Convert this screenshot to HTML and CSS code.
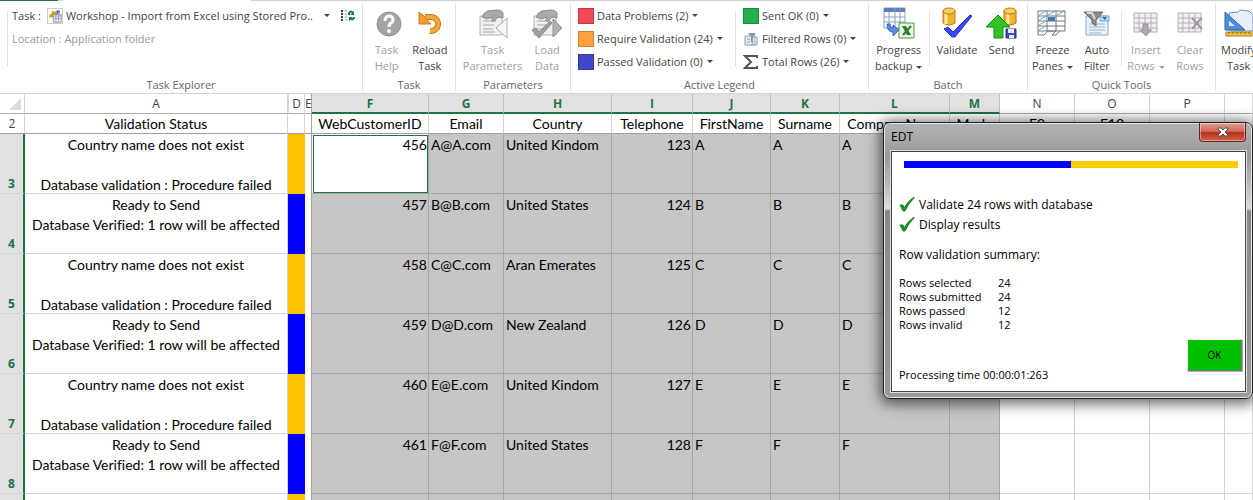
FILE: index.html
```html
<!DOCTYPE html>
<html lang="en">
<head>
<meta charset="utf-8">
<title>Workshop - Import from Excel using Stored Procedure</title>
<link rel="stylesheet" href="styles.css">
</head>
<body>
<div class="tabstrip"><span class="tab-file"></span><span class="tab-active"></span></div>
<header class="ribbon">
  <section class="group group-explorer">
    <div class="tools tools-lines">
      <button class="line"><span>Task :</span>
        <svg class="i16 framed" viewBox="0 0 16 16"><path d="M1 8l3-3 1-3 3 1 3-2-1 3 2 2-3 2-2 3-2-2-3 1z" fill="#d99a1c"/><path d="M10 1l4 1-1 3-3 1z" fill="#5b7fb8"/><rect x="6" y="6" width="9" height="9" fill="#fff" stroke="#7f93b2"/><path d="M6 8h9M6 11h9M9 6v9M12 6v9" stroke="#7f93b2"/></svg>
        <span class="task-name">Workshop - Import from Excel using Stored Pro..</span><i class="caret"></i>
        <svg class="i16 refresh" viewBox="0 0 16 16"><path d="M2 2v12" stroke="#2d3e5c" stroke-width="2" stroke-dasharray="2 1"/><path d="M5 3h2M5 6h2M5 9h2M5 12h2" stroke="#8793a5"/><path d="M9 7V5q2-3 4 0M14 9v1q-2 3-4 0" fill="none" stroke="#16823b" stroke-width="2"/><path d="M14 3v4h-4zM9 13V9h4z" fill="#16823b"/></svg>
      </button>
      <span class="line muted">Location : Application folder</span>
    </div>
    <h2>Task Explorer</h2>
  </section>

  <section class="group group-task">
    <div class="tools">
      <button class="big" disabled><svg class="i32" viewBox="0 0 32 32"><circle cx="18" cy="17" r="12" fill="#a5a5a5" stroke="#8f8f8f"/><path d="M14 14q0-5 4-5t4 4q0 2-2 3t-2 4" fill="none" stroke="#fff" stroke-width="3"/><circle cx="18" cy="24" r="2" fill="#fff"/></svg><span>Task<br>Help</span></button>
      <button class="big"><svg class="i32" viewBox="0 0 32 32"><path d="M11 10h7a7 7 0 1 1-2 14" fill="none" stroke="#c67a16" stroke-width="6"/><path d="M11 10h7a7 7 0 1 1-2 14" fill="none" stroke="#f2a73c" stroke-width="4"/><path d="M5 5v12h12l-4-4-3-4z" fill="#f0a033" stroke="#c67a16"/></svg><span>Reload<br>Task</span></button>
    </div>
    <h2>Task</h2>
  </section>

  <section class="group group-params">
    <div class="tools">
      <button class="big" disabled><svg class="i32" viewBox="0 0 32 32"><path d="M3 9h22v19H3z" fill="#f0f0f0" stroke="#b4b4b4"/><path d="M6 14h13M6 18h11M6 22h10M6 25h12" stroke="#a8a8a8"/><path d="M5 10q2-5 6-6l8-1q6 0 7 3v5l-5-1q-3 5-6 4 0-3 1-4l-6 2z" fill="#aaa" stroke="#8e8e8e"/><path d="M30 11v20L19 21z" fill="#f7f7f7" stroke="#aaa"/></svg><span>Task<br>Parameters</span></button>
      <button class="big" disabled><svg class="i32" viewBox="0 0 32 32"><path d="M3 9h22v19H3z" fill="#f0f0f0" stroke="#b4b4b4"/><path d="M6 14h13M6 18h11M6 22h10" stroke="#a8a8a8"/><path d="M5 10q2-5 6-6l8-1q6 0 7 3v5l-5-1q-3 5-6 4 0-3 1-4l-6 2z" fill="#aaa" stroke="#8e8e8e"/><path d="M22 12l9 9-9 9z" fill="#b0b0b0" stroke="#939393"/><path d="M1 23l4-2 3 4 11-11 2 2L8 31z" fill="#a0a0a0" stroke="#8d8d8d"/></svg><span>Load<br>Data</span></button>
    </div>
    <h2>Parameters</h2>
  </section>

  <section class="group group-legend">
    <div class="tools">
      <div class="legend edge">
        <button class="line"><i class="swatch red"></i>Data Problems (2)<i class="caret"></i></button>
        <button class="line"><i class="swatch orange"></i>Require Validation (24)<i class="caret"></i></button>
        <button class="line"><i class="swatch indigo"></i>Passed Validation (0)<i class="caret"></i></button>
      </div>
      <div class="legend legend-counts">
        <button class="line"><i class="swatch green"></i>Sent OK (0)<i class="caret"></i></button>
        <button class="line"><svg class="i16" viewBox="0 0 16 16"><path d="M2 5h10v9H2z" fill="#e4edf7" stroke="#8aa0bd"/><path d="M4 8h3M4 11h3" stroke="#8aa0bd"/><path d="M5 2h8l-3 4v7l-2-2V6z" fill="#8c96a3"/><path d="M10 6h4v8H8" fill="none" stroke="#8aa0bd"/></svg>Filtered Rows (0)<i class="caret"></i></button>
        <button class="line"><svg class="i16" viewBox="0 0 16 16"><path d="M14 4V2H2l6 6-6 6h12v-2" fill="none" stroke="#555" stroke-width="2"/></svg>Total Rows (26)<i class="caret"></i></button>
      </div>
    </div>
    <h2>Active Legend</h2>
  </section>

  <section class="group group-batch">
    <div class="tools">
      <button class="big edge"><svg class="i32" viewBox="0 0 32 32"><path d="M1 1h21v20H1z" fill="#fff" stroke="#8ca0c0"/><path d="M1 1h21v4H1z" fill="#5b80bd"/><path d="M1 10h21M1 15h21M6 5v16M12 1v20M17 1v20" stroke="#8ca0c0"/><path d="M4 17q0 8 6 8v4l6-6-6-5v3q-3 0-3-4z" fill="#5d8ee6" stroke="#3562b7"/><path d="M16 16h15v15H16z" fill="#eaf6e2" stroke="#4d9b3a"/><path d="M19 19h4l5 9h-4z" fill="#2c7f34"/><path d="M28 19l-8 9" stroke="#2c7f34" stroke-width="2"/></svg><span>Progress<br>backup<i class="caret"></i></span></button>
      <button class="big"><svg class="i32" viewBox="0 0 32 32"><path d="M2 4v12q6 4 12 0V4z" fill="#f0b52a" stroke="#b5790f"/><path d="M5 6v11" stroke="#ffe8a0" stroke-width="3"/><ellipse cx="8" cy="4" rx="6" ry="3" fill="#f9d05c" stroke="#b5790f"/><path d="M3 22l4-2 5 5L29 8l2 1-17 21h-3z" fill="#3b49f2" stroke="#2930c9"/></svg><span>Validate</span></button>
      <button class="big"><svg class="i32" viewBox="0 0 32 32"><path d="M18 4v12q6 4 12 0V4z" fill="#f0b52a" stroke="#b5790f"/><path d="M22 6v11" stroke="#ffe8a0" stroke-width="3"/><ellipse cx="24" cy="4" rx="6" ry="3" fill="#f9d05c" stroke="#b5790f"/><path d="M12 8l12 12h-7v11H8V20H0z" fill="#2fc326" stroke="#168e14"/><path d="M20 22h10v9H20z" fill="#3b4aa8" stroke="#27307c"/><path d="M22 22h6v4h-6zM23 28h5v3h-5z" fill="#eef"/></svg><span>Send</span></button>
    </div>
    <h2>Batch</h2>
  </section>

  <section class="group group-quick">
    <div class="tools">
      <div class="pair edge">
      <button class="big"><svg class="i32" viewBox="0 0 32 32"><path d="M2 4h27v20l-5 0-4 4h-4l4-4-8 0-4 4H2z" fill="#fff" stroke="#777"/><path d="M2 9h27M2 14h27M2 19h27M2 24h22M11 4v20M20 4v20" stroke="#777"/><path d="M12 10h7v4h-7z" fill="#3e7ab8"/><path d="M3 8l7-4M3 13l7-4M3 18l7-4M3 23l7-4M12 8l7-4M21 8l7-4" stroke="#68a8dd"/></svg><span>Freeze<br>Panes<i class="caret"></i></span></button>
      <button class="big"><svg class="i32" viewBox="0 0 32 32"><path d="M5 9h22v19H5z" fill="#e9f1fa" stroke="#8ba8c8"/><path d="M19 9h9v5h-9z" fill="#bcdcf5" stroke="#7ea6cf"/><path d="M21 10h5l-2 3z" fill="#2766ae"/><path d="M8 17h16M8 20h16M8 23h16M8 26h12" stroke="#9eb4cd"/><path d="M3 5h19l-7 8v6l-4-3v-3z" fill="#8d8d8d" stroke="#666"/><path d="M6 6h5l3 6" fill="none" stroke="#ddd" stroke-width="2"/></svg><span>Auto<br>Filter</span></button>
      </div>
      <div class="pair">
      <button class="big" disabled><svg class="i32" viewBox="0 0 32 32"><path d="M4 6h23v19H4z" fill="#f3eef3" stroke="#b5b0b5"/><path d="M4 11h23M4 16h23M4 21h23M9 6v19M15 6v19M21 6v19" stroke="#b5b0b5"/><path d="M13 17h5v6h3l-5 6-6-6h3z" fill="#aaa" stroke="#929292"/></svg><span>Insert<br>Rows<i class="caret"></i></span></button>
      <button class="big" disabled><svg class="i32" viewBox="0 0 32 32"><path d="M4 6h23v19H4z" fill="#f3eef3" stroke="#b5b0b5"/><path d="M4 11h23M4 16h23M4 21h23M9 6v19M15 6v19M21 6v19" stroke="#b5b0b5"/><path d="M18 11l10 11M28 11q-5 4-10 11" stroke="#999" stroke-width="2"/></svg><span>Clear<br>Rows</span></button>
      </div>
    </div>
    <h2>Quick Tools</h2>
  </section>

  <section class="group group-modify">
    <div class="tools">
      <button class="big"><svg class="i32" viewBox="0 0 32 32"><path d="M6 6l9-1 2-2 9 1 4 4v16H8z" fill="#e6f0fa" stroke="#6c93c4"/><path d="M2 5v18h20z" fill="#4f8ddb" stroke="#2c63ad"/><path d="M6 14v5h6z" fill="#dbe9fa"/><path d="M3 25h26v4H3z" fill="#f2c14c" stroke="#b58018"/><path d="M6 25v2M10 25v2M14 25v2M18 25v2M22 25v2M26 25v2" stroke="#8a5f0c"/></svg><span>Modify<br>Task</span></button>
    </div>
  </section>
</header>

<main class="sheet">
<table>
  <colgroup><col class="c-row"><col class="c-a"><col class="c-d"><col class="c-e"><col class="c-f"><col class="c-g"><col class="c-h"><col class="c-i"><col class="c-j"><col class="c-k"><col class="c-l"><col class="c-m"><col class="c-n"><col class="c-n"><col class="c-n"><col></colgroup>
  <thead>
  <tr class="letters"><th class="corner"><i></i></th><th>A</th><th class="letter-d">D</th><th class="freeze">E</th><th class="sel">F</th><th class="sel">G</th><th class="sel">H</th><th class="sel">I</th><th class="sel">J</th><th class="sel">K</th><th class="sel">L</th><th class="sel">M</th><th>N</th><th>O</th><th>P</th><th></th></tr>
  <tr class="names"><th class="num">2</th><th>Validation Status</th><th></th><th class="freeze"></th><th>WebCustomerID</th><th>Email</th><th>Country</th><th>Telephone</th><th>FirstName</th><th>Surname</th><th>CompanyName</th><th>Mode</th><th>F9</th><th>F10</th><th></th><th></th></tr>
  </thead>
  <tbody>
  <tr><th>3</th><td><p>Country name does not exist<br><br>Database validation : Procedure failed</p></td><td class="invalid"></td><td class="freeze"></td><td class="active">456</td><td>A@A.com</td><td>United Kindom</td><td>123</td><td>A</td><td>A</td><td>A</td><td></td><td></td><td></td><td></td><td></td></tr>
  <tr><th>4</th><td><p>Ready to Send<br>Database Verified: 1 row will be affected</p></td><td class="passed"></td><td class="freeze"></td><td>457</td><td>B@B.com</td><td>United States</td><td>124</td><td>B</td><td>B</td><td>B</td><td></td><td></td><td></td><td></td><td></td></tr>
  <tr><th>5</th><td><p>Country name does not exist<br><br>Database validation : Procedure failed</p></td><td class="invalid"></td><td class="freeze"></td><td>458</td><td>C@C.com</td><td>Aran Emerates</td><td>125</td><td>C</td><td>C</td><td>C</td><td></td><td></td><td></td><td></td><td></td></tr>
  <tr><th>6</th><td><p>Ready to Send<br>Database Verified: 1 row will be affected</p></td><td class="passed"></td><td class="freeze"></td><td>459</td><td>D@D.com</td><td>New Zealand</td><td>126</td><td>D</td><td>D</td><td>D</td><td></td><td></td><td></td><td></td><td></td></tr>
  <tr><th>7</th><td><p>Country name does not exist<br><br>Database validation : Procedure failed</p></td><td class="invalid"></td><td class="freeze"></td><td>460</td><td>E@E.com</td><td>United Kindom</td><td>127</td><td>E</td><td>E</td><td>E</td><td></td><td></td><td></td><td></td><td></td></tr>
  <tr><th>8</th><td><p>Ready to Send<br>Database Verified: 1 row will be affected</p></td><td class="passed"></td><td class="freeze"></td><td>461</td><td>F@F.com</td><td>United States</td><td>128</td><td>F</td><td>F</td><td>F</td><td></td><td></td><td></td><td></td><td></td></tr>
  <tr><th></th><td><p>Country name does not exist</p></td><td class="invalid"></td><td class="freeze"></td><td></td><td></td><td></td><td></td><td></td><td></td><td></td><td></td><td></td><td></td><td></td><td></td></tr>
  </tbody>
</table>
</main>

<div class="dialog" role="dialog" aria-labelledby="dialog-title">
  <div class="titlebar"><span id="dialog-title">EDT</span>
    <button class="close" aria-label="Close"><svg viewBox="0 0 12 10"><path d="M1 1h3l2 2 2-2h3v1L8 5l3 3v1H8L6 7 4 9H1V8l3-3-3-3z" fill="#fff" stroke="#4b4b58"/></svg></button>
  </div>
  <div class="client">
    <div class="progress"><i></i><i></i></div>
    <ul class="steps">
      <li><svg viewBox="0 0 16 16"><path d="M1 9l3 0 1 3Q9 5 15 1l0 1Q9 8 6 15H4z" fill="#1d8a24" stroke="#1d8a24"/></svg>Validate 24 rows with database</li>
      <li><svg viewBox="0 0 16 16"><path d="M1 9l3 0 1 3Q9 5 15 1l0 1Q9 8 6 15H4z" fill="#1d8a24" stroke="#1d8a24"/></svg>Display results</li>
    </ul>
    <p class="summary-title">Row validation summary:</p>
    <dl class="summary"><dt>Rows selected</dt><dd>24</dd><dt>Rows submitted</dt><dd>24</dd><dt>Rows passed</dt><dd>12</dd><dt>Rows invalid</dt><dd>12</dd></dl>
    <div class="footer"><span>Processing time 00:00:01:263</span><button class="ok">OK</button></div>
  </div>
</div>
</body>
</html>
```

FILE: styles.css
```css
* { box-sizing: border-box; }
body {
  margin: 0;
  height: 100vh;
  overflow: hidden;
  position: relative;
  background: #fff;
  color: #000;
  font-family: "Open Sans", "Noto Sans", sans-serif;
  font-size: 11px;
}
button { border: 0; padding: 0; background: none; font: inherit; color: inherit; }
h2, p, ul, dl, dd { margin: 0; padding: 0; }
svg { display: block; flex: none; }

/* Ribbon */
.tabstrip { display: flex; height: 1px; background: #d4d4d4; }
.tab-file { width: 58px; background: #217346; }
.tab-active { width: 188px; margin-left: 5px; background: #fff; }
.ribbon { display: flex; height: 93px; border-bottom: 1px solid #d4d4d4; color: #444; overflow: hidden; }
.group { flex: none; display: flex; flex-direction: column; justify-content: space-between; margin: 3px 0 2px; border-right: 1px solid #e1e1e1; }
.group h2 { font-size: 11px; line-height: 12px; font-weight: 400; text-align: center; color: #666; }
.group-explorer { width: 363px; }
.group-task { width: 93px; }
.group-params { width: 115px; }
.group-legend { width: 298px; }
.group-batch { width: 159px; }
.group-quick { width: 188px; }
.group-modify { border: 0; padding-left: 3px; }
.tools { display: flex; justify-content: space-evenly; height: 70px; }
.tools-lines {
  flex-direction: column; justify-content: flex-start; margin-left: 7px; padding-left: 5px;
  background: linear-gradient(#e1e1e1, #e1e1e1) 0 7px / 1px 55px no-repeat;
}
.edge { background: linear-gradient(#e1e1e1, #e1e1e1) 100% 7px / 1px 55px no-repeat; }
.line { display: flex; align-items: center; height: 23px; white-space: nowrap; }
.line .i16 { margin-right: 3px; }
.task-name { width: 256px; text-align: left; }
.muted { color: #999; }
.i16 { width: 16px; height: 16px; margin-left: 6px; }
.legend .i16 { margin-left: 0; }
.framed { border: 1px solid #ccc; }
.line .refresh { margin: 0 0 0 10px; }
.line .task-name + .caret { margin-left: 2px; }
.i32 { width: 32px; height: 32px; }
.big { display: flex; flex-direction: column; align-items: center; gap: 3px; padding: 3px 2px 0; line-height: 16px; text-align: center; white-space: nowrap; }
.big:disabled { color: #a0a0a0; }
.group-batch .tools { justify-content: flex-start; padding-left: 4px; }
.group-batch .edge { padding-right: 8px; margin-right: 4px; }
.group-batch .big { min-width: 44px; }
.group-quick .tools { justify-content: flex-start; padding-left: 2px; }
.pair { display: flex; }
.pair .big { min-width: 44px; }
.pair.edge { padding-right: 3px; margin-right: 2px; }
.caret { display: inline-block; margin-left: 4px; vertical-align: middle; border: 3px solid transparent; border-top-color: currentColor; border-bottom: 0; }
.group-legend .tools { justify-content: flex-start; padding-left: 7px; }
.legend { display: flex; flex-direction: column; }
.legend.edge { width: 158px; }
.legend-counts { padding-left: 7px; }
.swatch { width: 16px; height: 16px; margin-right: 3px; border: 1px solid #0003; }
.red { background: #f04a55; }
.orange { background: #ffa040; }
.indigo { background: #3f48cc; }
.green { background: #22b14c; }

/* Worksheet */
.sheet { font-family: Lato, "Open Sans", sans-serif; font-size: 14px; font-variant-ligatures: none; }
table { width: 100%; min-width: 1250px; table-layout: fixed; border-collapse: separate; border-spacing: 0; }
.c-row { width: 25px; }
.c-a { width: 263px; }
.c-d { width: 17px; }
.c-e { width: 7px; }
.c-f { width: 117px; }
.c-g { width: 75px; }
.c-h { width: 108px; }
.c-i { width: 81px; }
.c-j { width: 78px; }
.c-k { width: 69px; }
.c-l { width: 110px; }
.c-m { width: 50px; }
.c-n { width: 75px; }
th, td { padding: 0; border-right: 1px solid #d4d4d4; border-bottom: 1px solid #d4d4d4; font-weight: 400; line-height: 20px; white-space: nowrap; overflow: hidden; }
.letters th { height: 20px; line-height: 18px; color: #444; font-family: "Open Sans", sans-serif; font-size: 12px; border-bottom-color: #ababab; }
.letters .sel { background: #e1e1e1; color: #217346; font-weight: 700; border-right-color: #c0c0c0; border-bottom: 2px solid #217346; line-height: 17px; }
.letters .letter-d { border-left: 1px solid #d4d4d4; }
.corner i { display: block; width: 0; margin: 0 0 0 9px; border: 6px solid transparent; border-right-color: #dcdcdc; border-bottom-color: #dcdcdc; }
.names th { height: 20px; line-height: 19px; border-bottom-color: #a0a0a0; }
.names .num { color: #444; font-family: "Open Sans", sans-serif; font-size: 12px; }
tr .freeze, .letters .freeze { border-right-color: #a0a0a0; }
tbody tr { height: 60px; }
tbody th { vertical-align: bottom; background: #e1e1e1; color: #217346; font-family: "Open Sans", sans-serif; font-size: 12px; font-weight: 700; border-right: 2px solid #217346; line-height: 18px; }
td { vertical-align: top; padding: 1px 2px 0; }
td p { height: 58px; overflow: hidden; text-align: center; }
td:nth-child(3), td:nth-child(4) { border-bottom: 0; }
td:nth-child(3) { border-right: 0; }
.invalid { background: #ffc000; }
.passed { background: #00f; }
td:nth-child(n+5):nth-child(-n+12) { background: #c6c6c6; border-color: #a6a6a6; }
td:nth-child(5), td:nth-child(8) { text-align: right; padding-right: 1px; }
tbody td.active:nth-child(5) { background: #fff; outline: 1px solid #217346; outline-offset: -2px; }

/* Validation result window */
.dialog {
  position: absolute; left: 883px; top: 122px; width: 370px;
  padding: 0 6px 6px 7px; border: 1px solid #222; border-radius: 7px;
  background: linear-gradient(#b4b4b4, #999 12%, #b8b8b8 22%, #ddd 31%, #888 32%, #999);
  box-shadow: inset 0 0 0 1px #e4e4e4, 0 2px 14px 3px #0009;
}
.titlebar { display: flex; justify-content: space-between; height: 28px; font-size: 12px; line-height: 27px; }
.close { width: 47px; height: 19px; display: grid; place-items: center; border: 1px solid #632a24; border-top: 0; border-radius: 0 0 4px 4px; background: linear-gradient(#dfa397, #cf6450 48%, #b62e15 50%, #d2624a); box-shadow: inset 0 0 0 1px #ffffff66; }
.close svg { width: 12px; height: 10px; }
.client { border: 1px solid #444; outline: 1px solid #ddd; background: #fff; padding: 9px 7px 8px; }
.progress { display: flex; height: 7px; margin-left: 5px; }
.progress i { flex: 1; background: #00f; }
.progress i + i { background: #fc0; }
.steps { list-style: none; margin-top: 26px; font-size: 12px; }
.steps li { display: flex; align-items: center; gap: 4px; height: 20px; }
.steps svg { width: 16px; height: 16px; }
.summary-title { margin-top: 13px; line-height: 16px; font-size: 12px; }
.summary { display: grid; grid-template-columns: 99px auto; line-height: 14px; margin-top: 13px; }
.footer { display: flex; justify-content: space-between; align-items: flex-end; line-height: 16px; margin-top: 7px; }
.footer span { padding-top: 28px; }
.ok { width: 55px; height: 32px; align-self: flex-start; margin-right: -4px; background: #00c000; border: 1px solid; border-color: #eee #777 #777 #eee; box-shadow: 1px 1px 0 #aaa; font-size: 10px; }
```
